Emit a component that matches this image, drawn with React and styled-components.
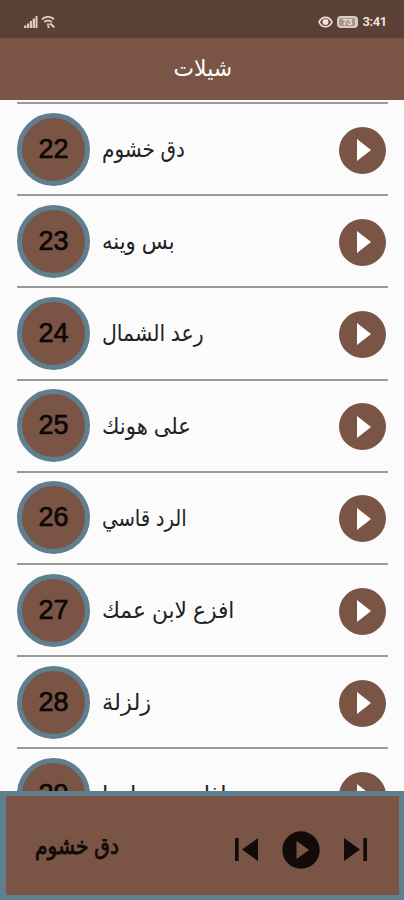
import { createGlobalStyle, styled } from 'styled-components';

const tracks = [
  { id: 22, title: 'دق خشوم', stretch: 0.87 },
  { id: 23, title: 'بس وينه', stretch: 0.92 },
  { id: 24, title: 'رعد الشمال', stretch: 0.89 },
  { id: 25, title: 'على هونك', stretch: 0.92 },
  { id: 26, title: 'الرد قاسي', stretch: 0.855 },
  { id: 27, title: 'افزع لابن عمك', stretch: 0.945 },
  { id: 28, title: 'زلزلة', stretch: 0.98 },
  { id: 29, title: 'اذا سمعو احنا', stretch: 0.99 },
];

const App = () => {
  return (
    <>
      <GlobalStyle />
      <Screen>
        <StatusBar>
          <StatusGroup>
            <svg width="14" height="12" viewBox="0 0 14 12" fill="#dccbc3">
              <path d="M0 9.500h2.300V12H0zM2.900 7.500h2.300V12H2.900zM5.800 5h2.300v7H5.800zM8.700 2.500H11V12H8.700zM11.500 0H13.500v12h-2z" />
            </svg>
            <svg width="15" height="12" viewBox="0 0 15 12" fill="none" stroke="#dccbc3" strokeWidth="2">
              <path d="M1 3.200C4.600.2 9.400.2 13 3.200M3.200 6c2.400-2 5.200-2 7.600 0M6 8.500h2.500M9.300 7.500l4 4M6.500 11h2" />
            </svg>
          </StatusGroup>
          <StatusGroup>
            <svg width="15" height="12" viewBox="0 0 15 12" fill="none" stroke="#efe2dc" strokeWidth="1.700">
              <path d="M1 6C4-.3 11-.3 14 6 11 12.300 4 12.300 1 6z" />
              <circle cx="7.500" cy="6" r="2.200" fill="#efe2dc" />
            </svg>
            <Battery>
              <span>73</span>
            </Battery>
            <Clock>3:41</Clock>
          </StatusGroup>
        </StatusBar>
        <Header>
          <h1>شيلات</h1>
        </Header>
        <TrackList>
          {tracks.map((track) => (
            <Track key={track.id}>
              <Number>{track.id}</Number>
              <Title $stretch={track.stretch}>{track.title}</Title>
              <PlayButton aria-label="play">
                <svg width="14" height="22" viewBox="0 0 14 22" fill="#fff">
                  <path d="M0 0l14 11L0 22z" />
                </svg>
              </PlayButton>
            </Track>
          ))}
        </TrackList>
        <Player>
          <NowPlaying>دق خشوم</NowPlaying>
          <Controls>
            <svg width="23" height="23" viewBox="0 0 23 23" fill="#120b09">
              <path d="M0 0h3.700v23H0zM23 0v23L7 11.500z" />
            </svg>
            <svg width="38" height="38" viewBox="0 0 38 38">
              <circle cx="19" cy="19" r="18.700" fill="#120b09" />
              <path d="M14.500 10l12.500 9-12.500 9z" fill="#7a5546" />
            </svg>
            <svg width="23" height="23" viewBox="0 0 23 23" fill="#120b09">
              <path d="M19.300 0H23v23h-3.700zM0 0l16 11.500L0 23z" />
            </svg>
          </Controls>
        </Player>
      </Screen>
    </>
  );
};

const GlobalStyle = createGlobalStyle`
  * {
    box-sizing: border-box;
  }
  body {
    margin: 0;
    font-family: 'Liberation Sans', 'DejaVu Sans', sans-serif;
  }
`;

const Screen = styled.div`
  display: flex;
  flex-direction: column;
  height: 900px;
  overflow: hidden;
  background: #fbfbfb;
`;

const StatusBar = styled.div`
  display: flex;
  flex: none;
  justify-content: space-between;
  align-items: center;
  height: 38px;
  padding: 6px 17px 0 24px;
  background: #5b4035;
`;

const StatusGroup = styled.div`
  display: flex;
  align-items: center;
  gap: 3px;
`;

const Battery = styled.div`
  display: flex;
  align-items: center;
  justify-content: center;
  width: 21px;
  height: 12px;
  margin-left: 1px;
  border: 2px solid #dccbc3;
  border-right-width: 3px;
  border-radius: 4px;
  background: #a8968d;
  color: #fff;
  font-size: 9px;
  line-height: 8px;
`;

const Clock = styled.span`
  margin-left: 1px;
  color: #f3e8e2;
  font-family: Roboto, sans-serif;
  font-size: 13px;
  font-weight: 600;
  letter-spacing: -0.300px;
  line-height: 14px;
`;

const Header = styled.header`
  display: flex;
  flex: none;
  align-items: center;
  justify-content: center;
  height: 62px;
  padding: 0 0 3px 2px;
  background: #7a5546;
  h1 {
    margin: 0;
    color: #fff;
    font-size: 23px;
    font-weight: 400;
    line-height: 30px;
    transform: scaleX(0.950);
  }
`;

const TrackList = styled.div`
  flex: 1;
  min-height: 0;
  padding: 2px 16px 0 17px;
  overflow: hidden;
`;

const Track = styled.div`
  display: flex;
  align-items: center;
  height: 92.200px;
  border-top: 2px solid #9a9a9a;
`;

const Number = styled.div`
  display: flex;
  flex: none;
  align-items: center;
  justify-content: center;
  width: 73px;
  height: 73px;
  border: 5px solid #5f7f8f;
  border-radius: 50%;
  background: #7a5546;
  color: #0d0807;
  font-size: 27px;
  -webkit-text-stroke: 0.700px #0d0807;
`;

const Title = styled.div`
  margin: 0 auto 0 12px;
  color: #222;
  font-size: 23px;
  line-height: 30px;
  white-space: nowrap;
  transform: scaleX(${(props) => props.$stretch});
  transform-origin: left center;
`;

const PlayButton = styled.button`
  display: flex;
  align-items: center;
  justify-content: center;
  width: 47px;
  height: 47px;
  margin: 2px 2px 0 0;
  padding: 0 0 0 3px;
  border: none;
  border-radius: 50%;
  background: #7a5546;
`;

const Player = styled.footer`
  display: flex;
  flex: none;
  align-items: center;
  justify-content: space-between;
  height: 109px;
  padding: 0 32px 0 29px;
  border: solid #5f7f8f;
  border-width: 5px 5px 5px 6px;
  background: #7a5546;
`;

const NowPlaying = styled.div`
  color: #120b09;
  font-size: 23px;
  line-height: 30px;
  transform: scaleX(0.880);
  transform-origin: left center;
  -webkit-text-stroke: 0.900px #120b09;
`;

const Controls = styled.div`
  display: flex;
  align-items: center;
  gap: 24px;
  padding-top: 8px;
`;

export default App;
